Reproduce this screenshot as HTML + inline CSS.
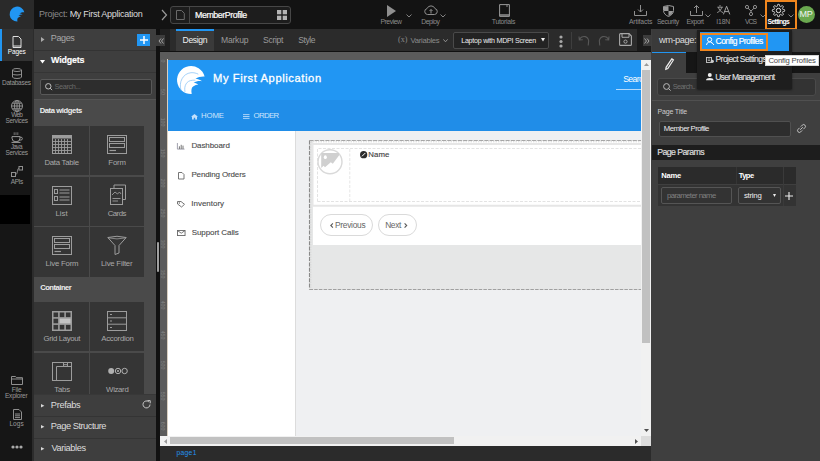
<!DOCTYPE html>
<html><head><meta charset="utf-8">
<style>
*{box-sizing:border-box;margin:0;padding:0}
html,body{width:820px;height:461px;overflow:hidden;background:#2b2b2b;font-family:"Liberation Sans",sans-serif;position:relative}
.a{position:absolute}
.t{position:absolute;white-space:nowrap;line-height:1}
svg{position:absolute;overflow:visible}
.ico{fill:none;stroke:#8f8f8f;stroke-width:1}
</style></head><body>
<div class="a" style="left:0;top:0;width:820px;height:29px;background:#131313"></div>
<div class="a" style="left:0;top:0;width:34px;height:29px;background:#2a2a2a"></div>
<svg style="left:7.8px;top:5.2px" width="18.2" height="18.2" viewBox="0 0 34 34">
<path d="M30.6 13.6 A14 14 0 1 0 17.7 31 C17 27 17.5 24 19.5 23.2 C21 22.4 22.5 21.8 24.3 21.6 C22.5 20.2 21 19.8 19.5 19.8 C22 18 25.5 17.6 28.2 18.2 C26 16.6 23.5 16 21.5 16 C24 14 27.5 13.4 30.6 13.6 Z" fill="#2196f3"/>
</svg>
<div class="t" style="left:39.0px;top:10px;font-size:9.0px;color:#8a8a8a;letter-spacing:-0.265px;">Project: <span style="color:#dcdcdc">My First Application</span></div>
<svg style="left:160px;top:9px" width="8" height="12" viewBox="0 0 8 12"><path d="M2 1 L6.5 6 L2 11" fill="none" stroke="#9a9a9a" stroke-width="1.2"/></svg>
<div class="a" style="left:170px;top:6px;width:121px;height:18px;border:1px solid #474747;border-radius:3px;background:#1d1d1d"></div>
<div class="a" style="left:189px;top:6px;width:1px;height:18px;background:#474747"></div>
<svg style="left:176px;top:10px" width="9" height="10" viewBox="0 0 9 10"><path d="M0.5 0.5 H5.5 L8.3 3.3 V9.5 H0.5 Z" fill="none" stroke="#6a6a6a" stroke-width="1"/></svg>
<div class="t" style="left:195.0px;top:11px;font-size:8.8px;color:#ffffff;letter-spacing:-0.419px;-webkit-text-stroke:0.2px #fff;">MemberProfile</div>
<svg style="left:276.5px;top:10px" width="10" height="10" viewBox="0 0 10 10"><rect x="0" y="0" width="4.3" height="4.3" fill="#b5b5b5"/><rect x="5.7" y="0" width="4.3" height="4.3" fill="#b5b5b5"/><rect x="0" y="5.7" width="4.3" height="4.3" fill="#b5b5b5"/><rect x="5.7" y="5.7" width="4.3" height="4.3" fill="#b5b5b5"/></svg>
<svg style="left:387px;top:5px" width="9" height="12" viewBox="0 0 9 12"><path d="M0 0 L9 6 L0 12 Z" fill="#8f8f8f"/></svg>
<div class="t" style="left:380.4px;top:19px;font-size:6.8px;color:#8c8c8c;letter-spacing:-0.429px;">Preview</div>
<svg style="left:406px;top:14px" width="6" height="4" viewBox="0 0 6 4"><path d="M0.5 0.5 L3 3 L5.5 0.5" fill="none" stroke="#8f8f8f" stroke-width="0.9"/></svg>
<svg style="left:424px;top:5px" width="14" height="10" viewBox="0 0 14 10"><path d="M3.5 9.5 H10.5 A3 3 0 0 0 11 3.6 A4.3 4.3 0 0 0 3 3.6 A3 3 0 0 0 3.5 9.5 Z M7 8.5 V4.5 M5.5 6 L7 4.5 L8.5 6" class="ico"/></svg>
<div class="t" style="left:421.3px;top:19px;font-size:6.8px;color:#8c8c8c;letter-spacing:-0.513px;">Deploy</div>
<svg style="left:440px;top:14px" width="6" height="4" viewBox="0 0 6 4"><path d="M0.5 0.5 L3 3 L5.5 0.5" fill="none" stroke="#8f8f8f" stroke-width="0.9"/></svg>
<svg style="left:498.5px;top:4px" width="11" height="13" viewBox="0 0 11 13"><path d="M0.6 0.6 H10.4 V12.4 H0.6 Z" fill="none" stroke="#9a9a9a" stroke-width="1"/><path d="M0.6 11 H10.4" stroke="#9a9a9a" stroke-width="1.4"/><path d="M8 0.6 V3" stroke="#9a9a9a" stroke-width="0.9"/></svg>
<div class="t" style="left:491.8px;top:19px;font-size:6.8px;color:#8c8c8c;letter-spacing:-0.265px;">Tutorials</div>
<svg style="left:634px;top:5px" width="13" height="11" viewBox="0 0 13 11"><path d="M0.5 6 V10.5 H12.5 V6 M6.5 0 V7 M4 4.5 L6.5 7 L9 4.5" class="ico"/></svg>
<div class="t" style="left:628.9px;top:19px;font-size:6.8px;color:#8c8c8c;letter-spacing:-0.145px;">Artifacts</div>
<svg style="left:663px;top:5px" width="11" height="12" viewBox="0 0 11 12"><path d="M5.5 0.5 L10.5 1.5 V5.5 C10.5 8.5 8 10.5 5.5 11.5 C3 10.5 0.5 8.5 0.5 5.5 V1.5 Z" fill="none" stroke="#9a9a9a" stroke-width="1"/><path d="M5.5 1 V6 H1 V1.8 Z" fill="#9a9a9a"/><path d="M5.5 6 H10 C9.7 8.5 7.7 10.2 5.5 11 Z" fill="#9a9a9a"/></svg>
<div class="t" style="left:656.9px;top:19px;font-size:6.8px;color:#8c8c8c;letter-spacing:-0.338px;">Security</div>
<svg style="left:690px;top:5px" width="13" height="11" viewBox="0 0 13 11"><path d="M0.5 6 V10.5 H12.5 V6 M6.5 8 V0.5 M4 3 L6.5 0.5 L9 3" class="ico"/></svg>
<div class="t" style="left:686.5px;top:19px;font-size:6.8px;color:#8c8c8c;letter-spacing:-0.433px;">Export</div>
<svg style="left:705px;top:14px" width="6" height="4" viewBox="0 0 6 4"><path d="M0.5 0.5 L3 3 L5.5 0.5" fill="none" stroke="#8f8f8f" stroke-width="0.9"/></svg>
<svg style="left:716.5px;top:5.2px" width="14" height="10" viewBox="0 0 14 10"><path d="M3 0 V1.6 M0.3 2.2 H5.9 M1.4 2.2 C2 4.6 3.4 6.4 6 7.6 M4.8 2.2 C4.2 4.6 2.8 6.4 0.2 7.6" fill="none" stroke="#a0a0a0" stroke-width="0.9"/><path d="M6.4 9.4 L9.6 1.2 L12.8 9.4 M7.6 6.6 H11.6" fill="none" stroke="#a0a0a0" stroke-width="1"/></svg>
<div class="t" style="left:716.3px;top:19px;font-size:6.8px;color:#8c8c8c;letter-spacing:-0.151px;">I18N</div>
<svg style="left:745px;top:5px" width="12" height="11" viewBox="0 0 12 11"><circle cx="2" cy="2" r="1.6" class="ico"/><circle cx="10" cy="2" r="1.6" class="ico"/><circle cx="6" cy="9" r="1.6" class="ico"/><path d="M3 3.2 L6 6 L9 3.2 M6 6 V7.4" class="ico"/></svg>
<div class="t" style="left:745.0px;top:19px;font-size:6.8px;color:#8c8c8c;letter-spacing:-0.973px;">VCS</div>
<svg style="left:760px;top:14px" width="6" height="4" viewBox="0 0 6 4"><path d="M0.5 0.5 L3 3 L5.5 0.5" fill="none" stroke="#8f8f8f" stroke-width="0.9"/></svg>
<div class="a" style="left:765px;top:0;width:32px;height:30px;border:2px solid #f0861e"></div>
<svg style="left:772.3px;top:4.2px" width="13" height="13" viewBox="0 0 13 13"><path d="M12.70 6.50 L12.70 6.74 L12.68 6.99 L12.60 7.22 L12.17 7.40 L11.70 7.53 L11.22 7.63 L10.79 7.71 L10.68 7.86 L10.63 8.02 L10.57 8.18 L10.50 8.34 L10.42 8.50 L10.39 8.68 L10.64 9.04 L10.91 9.44 L11.15 9.88 L11.33 10.31 L11.21 10.53 L11.05 10.71 L10.88 10.88 L10.71 11.05 L10.53 11.21 L10.31 11.33 L9.88 11.15 L9.44 10.91 L9.04 10.64 L8.68 10.39 L8.50 10.42 L8.34 10.50 L8.18 10.57 L8.02 10.63 L7.86 10.68 L7.71 10.79 L7.63 11.22 L7.53 11.70 L7.40 12.17 L7.22 12.60 L6.99 12.68 L6.74 12.70 L6.50 12.70 L6.26 12.70 L6.01 12.68 L5.78 12.60 L5.60 12.17 L5.47 11.70 L5.37 11.22 L5.29 10.79 L5.14 10.68 L4.98 10.63 L4.82 10.57 L4.66 10.50 L4.50 10.42 L4.32 10.39 L3.96 10.64 L3.56 10.91 L3.12 11.15 L2.69 11.33 L2.47 11.21 L2.29 11.05 L2.12 10.88 L1.95 10.71 L1.79 10.53 L1.67 10.31 L1.85 9.88 L2.09 9.44 L2.36 9.04 L2.61 8.68 L2.58 8.50 L2.50 8.34 L2.43 8.18 L2.37 8.02 L2.32 7.86 L2.21 7.71 L1.78 7.63 L1.30 7.53 L0.83 7.40 L0.40 7.22 L0.32 6.99 L0.30 6.74 L0.30 6.50 L0.30 6.26 L0.32 6.01 L0.40 5.78 L0.83 5.60 L1.30 5.47 L1.78 5.37 L2.21 5.29 L2.32 5.14 L2.37 4.98 L2.43 4.82 L2.50 4.66 L2.58 4.50 L2.61 4.32 L2.36 3.96 L2.09 3.56 L1.85 3.12 L1.67 2.69 L1.79 2.47 L1.95 2.29 L2.12 2.12 L2.29 1.95 L2.47 1.79 L2.69 1.67 L3.12 1.85 L3.56 2.09 L3.96 2.36 L4.32 2.61 L4.50 2.58 L4.66 2.50 L4.82 2.43 L4.98 2.37 L5.14 2.32 L5.29 2.21 L5.37 1.78 L5.47 1.30 L5.60 0.83 L5.78 0.40 L6.01 0.32 L6.26 0.30 L6.50 0.30 L6.74 0.30 L6.99 0.32 L7.22 0.40 L7.40 0.83 L7.53 1.30 L7.63 1.78 L7.71 2.21 L7.86 2.32 L8.02 2.37 L8.18 2.43 L8.34 2.50 L8.50 2.58 L8.68 2.61 L9.04 2.36 L9.44 2.09 L9.88 1.85 L10.31 1.67 L10.53 1.79 L10.71 1.95 L10.88 2.12 L11.05 2.29 L11.21 2.47 L11.33 2.69 L11.15 3.12 L10.91 3.56 L10.64 3.96 L10.39 4.32 L10.42 4.50 L10.50 4.66 L10.57 4.82 L10.63 4.98 L10.68 5.14 L10.79 5.29 L11.22 5.37 L11.70 5.47 L12.17 5.60 L12.60 5.78 L12.68 6.01 L12.70 6.26 Z" fill="none" stroke="#e8e8e8" stroke-width="1"/><circle cx="6.5" cy="6.5" r="2.2" fill="none" stroke="#e8e8e8" stroke-width="1"/></svg>
<div class="t" style="left:767.5px;top:19px;font-size:6.8px;color:#ffffff;letter-spacing:-0.635px;font-weight:bold;">Settings</div>
<svg style="left:788px;top:14px" width="6" height="4" viewBox="0 0 6 4"><path d="M0.5 0.5 L3 3 L5.5 0.5" fill="none" stroke="#8f8f8f" stroke-width="0.9"/></svg>
<div class="a" style="left:797.5px;top:6px;width:17px;height:17px;border-radius:50%;background:#6aa84f"></div>
<div class="t" style="left:797px;top:10px;width:18px;text-align:center;font-size:9px;color:#f2f2f2;letter-spacing:-0.3px">MP</div>
<div class="a" style="left:0;top:29px;width:32px;height:432px;background:#161616"></div>
<div class="a" style="left:32px;top:29px;width:2px;height:432px;background:#2c2c2c"></div>
<div class="a" style="left:0;top:29px;width:33px;height:32px;background:#333"></div>
<div class="a" style="left:0;top:29px;width:1.5px;height:32px;background:#2196f3"></div>
<svg style="left:12px;top:36px" width="10" height="12" viewBox="0 0 10 12"><path d="M1 0.5 H6.5 L9 3 V11.5 H1 Z" fill="none" stroke="#ddd" stroke-width="1"/><path d="M1 10 H9" stroke="#ddd" stroke-width="1"/></svg>
<div class="t" style="left:7.8px;top:49px;font-size:6.5px;color:#ffffff;letter-spacing:-0.095px;">Pages</div>
<svg style="left:12px;top:68px" width="10" height="11" viewBox="0 0 10 11"><ellipse cx="5" cy="2" rx="4.5" ry="1.5" class="ico"/><path d="M0.5 2 V9 A4.5 1.5 0 0 0 9.5 9 V2 M0.5 5.5 A4.5 1.5 0 0 0 9.5 5.5" class="ico"/></svg>
<div class="t" style="left:2.1px;top:80px;font-size:6.5px;color:#9a9a9a;letter-spacing:-0.266px;">Databases</div>
<svg style="left:11px;top:99.5px" width="12" height="12" viewBox="0 0 12 12"><circle cx="6" cy="6" r="5.5" class="ico"/><path d="M0.5 6 H11.5 M6 0.5 V11.5 M1.3 3.2 H10.7 M1.3 8.8 H10.7" class="ico" stroke-width="0.7"/><ellipse cx="6" cy="6" rx="2.5" ry="5.5" class="ico" stroke-width="0.7"/></svg>
<div class="t" style="left:11.3px;top:112px;font-size:6.5px;color:#9a9a9a;letter-spacing:-0.866px;">Web</div>
<div class="t" style="left:5.4px;top:118px;font-size:6.5px;color:#9a9a9a;letter-spacing:-0.339px;">Services</div>
<svg style="left:11px;top:132px" width="12" height="11" viewBox="0 0 12 11"><path d="M1 4.6 H9 V6.2 A4 3.6 0 0 1 1 6.2 Z" fill="none" stroke="#9a9a9a" stroke-width="1"/><path d="M9 5.2 H10 A1.4 1.4 0 0 1 10 8 H8.5" fill="none" stroke="#9a9a9a" stroke-width="0.9"/><path d="M3.2 0.3 V3 M5 0.3 V3 M6.8 0.3 V3" stroke="#9a9a9a" stroke-width="0.7"/><path d="M0.5 10.4 H9.5" stroke="#9a9a9a" stroke-width="1"/></svg>
<div class="t" style="left:10.7px;top:144px;font-size:6.5px;color:#9a9a9a;letter-spacing:-0.638px;">Java</div>
<div class="t" style="left:5.4px;top:150px;font-size:6.5px;color:#9a9a9a;letter-spacing:-0.339px;">Services</div>
<svg style="left:11px;top:166px" width="12" height="12" viewBox="0 0 12 12"><rect x="0.5" y="6.5" width="4" height="4" class="ico"/><rect x="8" y="0.5" width="3.5" height="3.5" class="ico"/><path d="M4.5 8.5 C7 8.5 6 2.2 8 2.2" class="ico"/></svg>
<div class="t" style="left:10.8px;top:179px;font-size:6.5px;color:#9a9a9a;letter-spacing:-0.459px;">APIs</div>
<div class="a" style="left:0;top:195px;width:29.5px;height:29px;background:#000"></div>
<svg style="left:11px;top:375.5px" width="12" height="9" viewBox="0 0 12 9"><path d="M0.5 0.5 H4.5 L5.5 1.7 H11.5 V8.5 H0.5 Z M0.5 3 H11.5" class="ico"/></svg>
<div class="t" style="left:11.7px;top:387px;font-size:6.5px;color:#9a9a9a;letter-spacing:-0.22px;">File</div>
<div class="t" style="left:5.0px;top:393px;font-size:6.5px;color:#9a9a9a;letter-spacing:-0.22px;">Explorer</div>
<svg style="left:13px;top:408.5px" width="9" height="11" viewBox="0 0 9 11"><path d="M0.5 0.5 H6 L8.5 3 V10.5 H0.5 Z M2 5 H7 M2 6.8 H7 M2 8.6 H7" class="ico"/></svg>
<div class="t" style="left:9.4px;top:421px;font-size:6.5px;color:#9a9a9a;letter-spacing:0.118px;">Logs</div>
<svg style="left:11px;top:445px" width="12" height="4" viewBox="0 0 12 4"><circle cx="2" cy="2" r="1.6" fill="#aaa"/><circle cx="6" cy="2" r="1.6" fill="#aaa"/><circle cx="10" cy="2" r="1.6" fill="#aaa"/></svg>
<div class="a" style="left:34px;top:29px;width:122px;height:432px;background:#3e3e3e"></div>
<div class="a" style="left:156px;top:29px;width:4px;height:432px;background:#111"></div>
<div class="a" style="left:34px;top:50px;width:122px;height:1px;background:#333"></div>
<svg style="left:40.5px;top:36.5px" width="4" height="5" viewBox="0 0 4 5"><path d="M0 0 L3.5 2.5 L0 5Z" fill="#aaa"/></svg>
<div class="t" style="left:50.8px;top:34px;font-size:9.0px;color:#a8a8a8;letter-spacing:-0.38px;">Pages</div>
<div class="a" style="left:137px;top:34px;width:13px;height:12px;background:#2196f3"></div>
<svg style="left:139.5px;top:36px" width="8" height="8" viewBox="0 0 8 8"><path d="M4 0 V8 M0 4 H8" stroke="#fff" stroke-width="1.5"/></svg>
<svg style="left:40px;top:60px" width="5" height="4" viewBox="0 0 5 4"><path d="M0 0 H5 L2.5 3.5Z" fill="#fff"/></svg>
<div class="t" style="left:51.0px;top:56px;font-size:8.9px;color:#ffffff;letter-spacing:-0.167px;font-weight:600;-webkit-text-stroke:0.15px #fff;">Widgets</div>
<div class="a" style="left:34px;top:72px;width:122px;height:1px;background:#353535"></div>
<div class="a" style="left:39.5px;top:78.5px;width:112px;height:16px;background:#2d2d2d;border:1px solid #585858;border-radius:2px"></div>
<svg style="left:45px;top:83px" width="7.5" height="7.5" viewBox="0 0 8 8"><circle cx="3.5" cy="3.5" r="2.9" fill="none" stroke="#c8c8c8" stroke-width="1"/><path d="M5.5 5.5 L7.6 7.6" stroke="#c8c8c8" stroke-width="1"/></svg>
<div class="t" style="left:54.5px;top:83px;font-size:7.4px;color:#6a6a6a;letter-spacing:-0.42px;">Search...</div>
<div class="a" style="left:34px;top:99px;width:122px;height:296px;background:#4a4a4a"></div>
<div class="a" style="left:34px;top:99px;width:122px;height:1px;background:#535353"></div>
<div class="t" style="left:39.7px;top:107px;font-size:7.6px;color:#eeeeee;letter-spacing:-0.386px;font-weight:bold;">Data widgets</div>
<div class="a" style="left:34px;top:125.9px;width:55px;height:49.3px;background:#353535"></div>
<div class="a" style="left:90px;top:125.9px;width:54px;height:49.3px;background:#353535"></div>
<div class="t" style="left:44.4px;top:159px;font-size:7.8px;color:#a9a9a9;letter-spacing:-0.261px;">Data Table</div>
<div class="t" style="left:108.3px;top:159px;font-size:7.8px;color:#a9a9a9;letter-spacing:-0.167px;">Form</div>
<div class="a" style="left:34px;top:176.8px;width:55px;height:49.3px;background:#353535"></div>
<div class="a" style="left:90px;top:176.8px;width:54px;height:49.3px;background:#353535"></div>
<div class="t" style="left:55.4px;top:210px;font-size:7.8px;color:#a9a9a9;letter-spacing:0.043px;">List</div>
<div class="t" style="left:107.7px;top:210px;font-size:7.8px;color:#a9a9a9;letter-spacing:-0.527px;">Cards</div>
<div class="a" style="left:34px;top:227.4px;width:55px;height:49.3px;background:#353535"></div>
<div class="a" style="left:90px;top:227.4px;width:54px;height:49.3px;background:#353535"></div>
<div class="t" style="left:45.6px;top:260px;font-size:7.8px;color:#a9a9a9;letter-spacing:-0.209px;">Live Form</div>
<div class="t" style="left:101.0px;top:260px;font-size:7.8px;color:#a9a9a9;letter-spacing:-0.221px;">Live Filter</div>
<div class="a" style="left:34px;top:302.2px;width:55px;height:49.3px;background:#353535"></div>
<div class="a" style="left:90px;top:302.2px;width:54px;height:49.3px;background:#353535"></div>
<div class="t" style="left:43.6px;top:335px;font-size:7.8px;color:#a9a9a9;letter-spacing:-0.355px;">Grid Layout</div>
<div class="t" style="left:101.2px;top:335px;font-size:7.8px;color:#a9a9a9;letter-spacing:-0.243px;">Accordion</div>
<div class="a" style="left:34px;top:352.8px;width:55px;height:49.3px;background:#353535"></div>
<div class="a" style="left:90px;top:352.8px;width:54px;height:49.3px;background:#353535"></div>
<div class="t" style="left:54.2px;top:386px;font-size:7.8px;color:#a9a9a9;letter-spacing:-0.159px;">Tabs</div>
<div class="t" style="left:106.1px;top:386px;font-size:7.8px;color:#a9a9a9;letter-spacing:-0.326px;">Wizard</div>
<div class="t" style="left:40.2px;top:284px;font-size:7.6px;color:#eeeeee;letter-spacing:-0.476px;font-weight:bold;">Container</div>
<svg style="left:52px;top:135px" width="20" height="19" viewBox="0 0 20 19"><rect x="0.5" y="0.5" width="19" height="18" fill="none" stroke="#9c9c9c"/><rect x="0.5" y="0.5" width="19" height="3" fill="#9c9c9c"/><path d="M3.5 4 V18 M6.5 4 V18 M9.5 4 V18 M12.5 4 V18 M15.5 4 V18 M1 6.5 H19 M1 9.5 H19 M1 12.5 H19 M1 15.5 H19" stroke="#9c9c9c" stroke-width="0.9"/></svg>
<svg style="left:107px;top:135px" width="20" height="19" viewBox="0 0 20 19"><rect x="0.5" y="0.5" width="19" height="18" fill="none" stroke="#9c9c9c"/><rect x="2.5" y="2.5" width="15" height="4" fill="none" stroke="#9c9c9c"/><rect x="2.5" y="8.5" width="15" height="4" fill="none" stroke="#9c9c9c"/><path d="M2.5 15.5 H9" stroke="#9c9c9c" stroke-width="1.2"/></svg>
<svg style="left:52px;top:186px" width="20" height="19" viewBox="0 0 20 19"><rect x="0.5" y="0.5" width="19" height="18" fill="none" stroke="#9c9c9c"/><rect x="2.5" y="3.5" width="3" height="4" fill="none" stroke="#9c9c9c"/><rect x="2.5" y="10.5" width="3" height="4" fill="none" stroke="#9c9c9c"/><path d="M7.5 4 H17.5 M7.5 7 H17.5 M7.5 11 H17.5 M7.5 14 H17.5" stroke="#9c9c9c" stroke-width="1"/></svg>
<svg style="left:110px;top:184px" width="16" height="21" viewBox="0 0 16 21"><path d="M4 4 V1 H15.5 V15.5 H12.5" fill="none" stroke="#9c9c9c"/><rect x="0.5" y="4.5" width="12" height="16" fill="none" stroke="#9c9c9c"/><path d="M2 11 L5 8 L7.5 10 L9.5 8 L11 10 M2.5 14.5 H10.5 M2.5 17 H8" fill="none" stroke="#9c9c9c" stroke-width="0.9"/></svg>
<svg style="left:52px;top:236px" width="20" height="19" viewBox="0 0 20 19"><rect x="0.5" y="0.5" width="19" height="18" fill="none" stroke="#9c9c9c"/><rect x="2.5" y="2.5" width="15" height="4" fill="none" stroke="#9c9c9c"/><rect x="2.5" y="8.5" width="15" height="4" fill="none" stroke="#9c9c9c"/><path d="M2.5 15.5 H9" stroke="#9c9c9c" stroke-width="1.2"/></svg>
<svg style="left:107px;top:236px" width="20" height="19" viewBox="0 0 20 19"><path d="M0.8 1.5 Q10 -1 19.2 1.5 L12 9.5 V17 L8 18.5 V9.5 Z" fill="none" stroke="#9c9c9c" stroke-width="1"/><path d="M1 1.8 Q10 4 19 1.8" fill="none" stroke="#9c9c9c" stroke-width="0.8"/></svg>
<svg style="left:52px;top:311px" width="20" height="20" viewBox="0 0 20 20"><rect x="0" y="0" width="20" height="20" fill="#9c9c9c"/><rect x="1.5" y="1.5" width="4.6" height="4.6" fill="#353535"/><rect x="7.7" y="1.5" width="4.6" height="4.6" fill="#353535"/><rect x="13.9" y="1.5" width="4.6" height="4.6" fill="#353535"/><rect x="1.5" y="7.7" width="4.6" height="4.6" fill="#353535"/><rect x="7.7" y="7.7" width="10.8" height="4.6" fill="#c4c4c4"/><rect x="1.5" y="13.9" width="4.6" height="4.6" fill="#353535"/><rect x="7.7" y="13.9" width="4.6" height="4.6" fill="#353535"/><rect x="13.9" y="13.9" width="4.6" height="4.6" fill="#353535"/></svg>
<svg style="left:107px;top:311px" width="20" height="20" viewBox="0 0 20 20"><rect x="0.5" y="0.5" width="19" height="19" fill="none" stroke="#9c9c9c"/><path d="M1 6.8 H19 M1 13.2 H19" stroke="#9c9c9c" stroke-width="1"/><path d="M3 3.5 H5 M3 10 H5 M3 16.5 H5" stroke="#9c9c9c" stroke-width="1"/></svg>
<svg style="left:52px;top:362px" width="20" height="19" viewBox="0 0 20 19"><rect x="0.5" y="0.5" width="19" height="18" fill="none" stroke="#9c9c9c"/><path d="M4.5 18 V4.5 H19 M11.5 1 V4.5 M15.5 4.5 V1 M12 2.7 H15" fill="none" stroke="#9c9c9c" stroke-width="1"/></svg>
<svg style="left:107.5px;top:367px" width="20" height="8" viewBox="0 0 20 8"><circle cx="3.2" cy="4" r="3" fill="#b0b0b0"/><circle cx="10" cy="4" r="2.7" fill="none" stroke="#b0b0b0"/><circle cx="10" cy="4" r="1" fill="#b0b0b0"/><circle cx="16.6" cy="4" r="2.7" fill="none" stroke="#b0b0b0"/></svg>
<div class="a" style="left:34px;top:395px;width:122px;height:66px;background:#3e3e3e"></div>
<div class="a" style="left:34px;top:394px;width:122px;height:1px;background:#383838"></div>
<div class="a" style="left:34px;top:416px;width:122px;height:1px;background:#343434"></div>
<div class="a" style="left:34px;top:438px;width:122px;height:1px;background:#343434"></div>
<svg style="left:40.9px;top:403.6px" width="4" height="4" viewBox="0 0 4 4"><path d="M0 0 L3.4 1.8 L0 3.6Z" fill="#d8d8d8"/></svg>
<svg style="left:40.9px;top:425px" width="4" height="4" viewBox="0 0 4 4"><path d="M0 0 L3.4 1.8 L0 3.6Z" fill="#d8d8d8"/></svg>
<svg style="left:40.9px;top:446.6px" width="4" height="4" viewBox="0 0 4 4"><path d="M0 0 L3.4 1.8 L0 3.6Z" fill="#d8d8d8"/></svg>
<div class="t" style="left:50.8px;top:401px;font-size:9.3px;color:#dddddd;letter-spacing:-0.35px;">Prefabs</div>
<div class="t" style="left:50.8px;top:422px;font-size:9.3px;color:#dddddd;letter-spacing:-0.482px;">Page Structure</div>
<div class="t" style="left:51.5px;top:444px;font-size:9.3px;color:#dddddd;letter-spacing:-0.441px;">Variables</div>
<svg style="left:141.8px;top:399.5px" width="9" height="9" viewBox="0 0 9 9"><path d="M8 4.5 A3.5 3.5 0 1 1 6.8 1.8" fill="none" stroke="#c8c8c8" stroke-width="1"/><path d="M5.5 0.6 H8.2 V3.3" fill="none" stroke="#c8c8c8" stroke-width="1"/></svg>
<div class="a" style="left:160px;top:29px;width:477px;height:22px;background:#2b2b2b"></div>
<div class="a" style="left:160px;top:29px;width:10px;height:22px;background:#1f1f1f"></div>
<div class="a" style="left:637px;top:29px;width:14px;height:22px;background:#1a1a1a"></div>
<div class="a" style="left:156px;top:35px;width:9px;height:11px;background:#3c3c3c"></div>
<svg style="left:157.5px;top:38px" width="6" height="6" viewBox="0 0 6 6"><path d="M3 0.5 L1 3 L3 5.5 M5.5 0.5 L3.5 3 L5.5 5.5" fill="none" stroke="#b0b0b0" stroke-width="0.9"/></svg>
<div class="a" style="left:176px;top:29px;width:37.5px;height:22px;background:#3a3a3a"></div>
<div class="a" style="left:176px;top:29px;width:37.5px;height:2px;background:#2196f3"></div>
<div class="t" style="left:182.6px;top:36px;font-size:8.6px;color:#f0f0f0;letter-spacing:-0.357px;">Design</div>
<div class="t" style="left:221.0px;top:36px;font-size:8.6px;color:#9a9a9a;letter-spacing:-0.239px;">Markup</div>
<div class="t" style="left:263.1px;top:36px;font-size:8.6px;color:#9a9a9a;letter-spacing:-0.319px;">Script</div>
<div class="t" style="left:298.2px;top:36px;font-size:8.6px;color:#9a9a9a;letter-spacing:-0.434px;">Style</div>
<div class="t" style="left:398px;top:36px;font-size:8px;color:#8a8a8a;font-family:'Liberation Serif',serif">(x)</div>
<div class="t" style="left:410.6px;top:37px;font-size:7.7px;color:#8a8a8a;letter-spacing:-0.297px;">Variables</div>
<svg style="left:442.8px;top:38.5px" width="5" height="4" viewBox="0 0 5 4"><path d="M0.4 0.4 L2.5 2.8 L4.6 0.4" fill="none" stroke="#9a9a9a" stroke-width="0.9"/></svg>
<div class="a" style="left:452.5px;top:31.5px;width:96.5px;height:17.5px;background:#232323;border:1px solid #4a4a4a;border-radius:2px"></div>
<div class="t" style="left:461.2px;top:38px;font-size:7.1px;color:#eeeeee;letter-spacing:-0.244px;">Laptop with MDPI Screen</div>
<svg style="left:541px;top:38.2px" width="4" height="3.5" viewBox="0 0 4 3.5"><path d="M0 0 H4 L2 3.5Z" fill="#eee"/></svg>
<svg style="left:558.5px;top:34.5px" width="4" height="13" viewBox="0 0 4 13"><circle cx="2" cy="2" r="1.6" fill="#a8a8a8"/><circle cx="2" cy="6.5" r="1.6" fill="#a8a8a8"/><circle cx="2" cy="11" r="1.6" fill="#a8a8a8"/></svg>
<div class="a" style="left:571px;top:32px;width:1px;height:17px;background:#3e3e3e"></div>
<svg style="left:578px;top:35px" width="12" height="11" viewBox="0 0 12 11"><path d="M1 1.5 L1.3 5 L4.8 4.7 M1.5 4.8 A4.6 4.6 0 0 1 10.5 7.5 L10.2 10.5" fill="none" stroke="#585858" stroke-width="1.1"/></svg>
<svg style="left:598px;top:35px" width="12" height="11" viewBox="0 0 12 11"><path d="M11 1.5 L10.7 5 L7.2 4.7 M10.5 4.8 A4.6 4.6 0 0 0 1.5 7.5 L1.8 10.5" fill="none" stroke="#585858" stroke-width="1.1"/></svg>
<svg style="left:619px;top:33px" width="13" height="13" viewBox="0 0 13 13"><path d="M0.6 1.6 Q0.6 0.6 1.6 0.6 H10 L12.4 3 V11.4 Q12.4 12.4 11.4 12.4 H1.6 Q0.6 12.4 0.6 11.4 Z" fill="none" stroke="#a8a8a8" stroke-width="1.1"/><path d="M3 0.6 V4.3 H10 V0.6" fill="none" stroke="#a8a8a8" stroke-width="1"/><circle cx="6.5" cy="8.6" r="1.6" fill="none" stroke="#a8a8a8" stroke-width="1"/></svg>
<div class="a" style="left:643px;top:35px;width:8px;height:11px;background:#3c3c3c"></div>
<svg style="left:644px;top:38px" width="6" height="6" viewBox="0 0 6 6"><path d="M0.5 0.5 L2.5 3 L0.5 5.5 M3 0.5 L5 3 L3 5.5" fill="none" stroke="#b0b0b0" stroke-width="0.9"/></svg>
<div class="a" style="left:156px;top:51px;width:496px;height:410px;background:#111"></div>
<div class="a" style="left:160px;top:52px;width:491px;height:394px;background:#5b5b5b"></div>
<div class="a" style="left:156.5px;top:242px;width:2.5px;height:30px;background:#a0a0a0;border-radius:1px"></div>
<div class="a" style="left:167px;top:59px;width:1px;height:378px;background:#d9cfc0"></div>
<div class="t" style="left:152.6px;top:58.3px;width:20px;height:6px;line-height:6px;text-align:center;font-size:5.2px;color:#858585;transform:rotate(90deg)">0</div>
<div class="t" style="left:152.6px;top:88.69999999999999px;width:20px;height:6px;line-height:6px;text-align:center;font-size:5.2px;color:#858585;transform:rotate(90deg)">50</div>
<div class="t" style="left:152.6px;top:119.1px;width:20px;height:6px;line-height:6px;text-align:center;font-size:5.2px;color:#858585;transform:rotate(90deg)">100</div>
<div class="t" style="left:152.6px;top:149.5px;width:20px;height:6px;line-height:6px;text-align:center;font-size:5.2px;color:#858585;transform:rotate(90deg)">150</div>
<div class="t" style="left:152.6px;top:179.89999999999998px;width:20px;height:6px;line-height:6px;text-align:center;font-size:5.2px;color:#858585;transform:rotate(90deg)">200</div>
<div class="t" style="left:152.6px;top:210.3px;width:20px;height:6px;line-height:6px;text-align:center;font-size:5.2px;color:#858585;transform:rotate(90deg)">250</div>
<div class="t" style="left:152.6px;top:240.7px;width:20px;height:6px;line-height:6px;text-align:center;font-size:5.2px;color:#858585;transform:rotate(90deg)">300</div>
<div class="t" style="left:152.6px;top:271.09999999999997px;width:20px;height:6px;line-height:6px;text-align:center;font-size:5.2px;color:#858585;transform:rotate(90deg)">350</div>
<div class="t" style="left:152.6px;top:301.5px;width:20px;height:6px;line-height:6px;text-align:center;font-size:5.2px;color:#858585;transform:rotate(90deg)">400</div>
<div class="t" style="left:152.6px;top:331.9px;width:20px;height:6px;line-height:6px;text-align:center;font-size:5.2px;color:#858585;transform:rotate(90deg)">450</div>
<div class="t" style="left:152.6px;top:362.3px;width:20px;height:6px;line-height:6px;text-align:center;font-size:5.2px;color:#858585;transform:rotate(90deg)">500</div>
<div class="t" style="left:152.6px;top:392.7px;width:20px;height:6px;line-height:6px;text-align:center;font-size:5.2px;color:#858585;transform:rotate(90deg)">550</div>
<div class="t" style="left:152.6px;top:423.09999999999997px;width:20px;height:6px;line-height:6px;text-align:center;font-size:5.2px;color:#858585;transform:rotate(90deg)">600</div>
<div class="a" style="left:168px;top:59.5px;width:473px;height:377px;background:#eff0f2"></div>
<div class="a" style="left:168px;top:59.5px;width:473px;height:40px;background:#2196f3"></div>
<div class="a" style="left:168px;top:99.5px;width:473px;height:31.5px;background:#208de8"></div>
<svg style="left:174px;top:63px" width="34" height="34" viewBox="0 0 34 34">
<path d="M30.6 13.6 A14 14 0 1 0 17.7 31 C17 27 17.5 24 19.5 23.2 C21 22.4 22.5 21.8 24.3 21.6 C22.5 20.2 21 19.8 19.5 19.8 C22 18 25.5 17.6 28.2 18.2 C26 16.6 23.5 16 21.5 16 C24 14 27.5 13.4 30.6 13.6 Z" fill="#fff"/>
<path d="M7 27.3 C4.5 19 9 10.5 17 9.7 C19.8 9.5 22.5 10.2 24.3 11.2 M11 28.8 C9.8 23 12.5 17.5 18.4 17.3 C19.5 17.2 20.5 17.1 21.4 17.2" fill="none" stroke="#7fbff5" stroke-width="0.7"/>
</svg>
<div class="t" style="left:213.0px;top:73px;font-size:11.2px;color:#ffffff;letter-spacing:0.585px;-webkit-text-stroke:0.3px #fff;">My First Application</div>
<div class="t" style="left:623.2px;top:75px;font-size:8.6px;color:#ffffff;letter-spacing:-0.616px;">Searc</div>
<div class="a" style="left:616px;top:89px;width:25px;height:1px;background:#b3d9fb"></div>
<svg style="left:190.5px;top:113.5px" width="7" height="5.5" viewBox="0 0 7 5.5"><path d="M0 2.8 L3.5 0 L7 2.8 H6 V5.5 H4.2 V3.8 H2.8 V5.5 H1 V2.8 Z" fill="#c3e0fb"/></svg>
<div class="t" style="left:201.0px;top:112px;font-size:7.8px;color:#cfe6fc;letter-spacing:-0.132px;">HOME</div>
<svg style="left:243.2px;top:114px" width="6.5" height="5" viewBox="0 0 6.5 5"><path d="M0 0.6 H6.5 M0 2.5 H6.5 M0 4.4 H6.5" stroke="#b8dafa" stroke-width="0.9"/></svg>
<div class="t" style="left:253.6px;top:112px;font-size:7.8px;color:#cfe6fc;letter-spacing:-0.634px;">ORDER</div>
<div class="a" style="left:168px;top:131px;width:128px;height:306px;background:#fff;border-right:1px solid #dcdcdc"></div>
<svg style="left:177.4px;top:143px" width="7.5" height="6.5" viewBox="0 0 7.5 6.5"><path d="M0.4 0 V6.1 H7.5" fill="none" stroke="#8a8a9a" stroke-width="0.8"/><path d="M2.4 6 V3.3 M4.2 6 V1.8 M6 6 V2.6" fill="none" stroke="#777" stroke-width="1"/></svg>
<div class="t" style="left:191.4px;top:142px;font-size:8.0px;color:#4d4d4d;letter-spacing:-0.086px;-webkit-text-stroke:0.12px #4d4d4d;">Dashboard</div>
<svg style="left:178px;top:171.5px" width="6.5" height="7.5" viewBox="0 0 6.5 7.5"><path d="M0.5 0.5 H4 L6 2.5 V7 H0.5 Z" fill="none" stroke="#666" stroke-width="0.9"/></svg>
<div class="t" style="left:191.4px;top:171px;font-size:8.0px;color:#4d4d4d;letter-spacing:-0.133px;-webkit-text-stroke:0.12px #4d4d4d;">Pending Orders</div>
<svg style="left:177.2px;top:201px" width="8" height="6.5" viewBox="0 0 8 6.5"><path d="M0.5 0.5 H4 L7.5 3.3 L4.6 6 L0.5 3 Z" fill="none" stroke="#666" stroke-width="0.9"/><circle cx="2.3" cy="2" r="0.7" fill="#666"/></svg>
<div class="t" style="left:191.3px;top:200px;font-size:8.0px;color:#4d4d4d;letter-spacing:-0.013px;-webkit-text-stroke:0.12px #4d4d4d;">Inventory</div>
<svg style="left:177px;top:230.3px" width="8.5" height="6" viewBox="0 0 8.5 6"><rect x="0.45" y="0.45" width="7.6" height="5.1" fill="none" stroke="#666" stroke-width="0.9"/><path d="M0.5 0.6 L4.25 3.2 L8 0.6" fill="none" stroke="#666" stroke-width="0.9"/></svg>
<div class="t" style="left:191.7px;top:229px;font-size:8.0px;color:#4d4d4d;letter-spacing:-0.077px;-webkit-text-stroke:0.12px #4d4d4d;">Support Calls</div>
<div class="a" style="left:309px;top:140px;width:332px;height:149.5px;background:#e6e7e7"></div>
<div class="a" style="left:313px;top:141px;width:328px;height:104px;background:#fff"></div>
<svg style="left:0;top:0" width="820" height="461" viewBox="0 0 820 461"><path d="M309.5 140.5 H641" stroke="#a6a6a6" stroke-width="1" stroke-dasharray="4 1.3"/><path d="M309.5 140.5 V289.5" fill="none" stroke="#8a8a8a" stroke-width="1.1" stroke-dasharray="4 1.3"/><path d="M309.5 289.5 H641" fill="none" stroke="#a0a0a0" stroke-width="1" stroke-dasharray="3.5 1.2"/><path d="M310.5 141.8 H641 M310.8 141.5 V289" fill="none" stroke="#d6d6d6" stroke-width="1" stroke-dasharray="1.5 1"/><path d="M312.5 206 V144 H641 M312.5 205.7 H641" fill="none" stroke="#e6e6e6" stroke-width="2"/><path d="M317.5 201.5 V148.5 H641 M317.5 201.5 H641" fill="none" stroke="#e3e3e3" stroke-width="1" stroke-dasharray="3 1.5"/><path d="M349.8 149 V201" fill="none" stroke="#e6e6e6" stroke-width="1" stroke-dasharray="3 1.5"/><circle cx="330" cy="161.7" r="12" fill="#fff" stroke="#d9d9d9" stroke-width="1.4"/><path d="M321.2 153 H339 V155.5 L332.8 163.8 L330.8 162.2 L325 167.2 L323.6 165.8 L321.2 168 Z" fill="#d0d0d0"/><ellipse cx="325.3" cy="157.2" rx="1.5" ry="1.9" fill="#fff"/></svg>
<svg style="left:360.2px;top:151.4px" width="7.3" height="7.3" viewBox="0 0 7.3 7.3"><circle cx="3.65" cy="3.65" r="3.65" fill="#2c2c2c"/><path d="M2 5.3 L5.3 2" stroke="#fff" stroke-width="1"/></svg>
<div class="t" style="left:368.3px;top:151px;font-size:7.8px;color:#444444;letter-spacing:0.077px;-webkit-text-stroke:0.15px #444;">Name</div>
<div class="a" style="left:320px;top:214px;width:53px;height:21.5px;border:1px solid #dadada;border-radius:11px;background:#fff"></div>
<svg style="left:329.8px;top:222.8px" width="3.5" height="5" viewBox="0 0 3.5 5"><path d="M2.9 0.4 L0.8 2.5 L2.9 4.6" fill="none" stroke="#5a5a5a" stroke-width="1.1"/></svg>
<div class="t" style="left:335.0px;top:221px;font-size:8.4px;color:#666666;letter-spacing:-0.283px;">Previous</div>
<div class="a" style="left:377.5px;top:214px;width:39.5px;height:21.5px;border:1px solid #dadada;border-radius:11px;background:#fff"></div>
<div class="t" style="left:385.2px;top:221px;font-size:8.4px;color:#666666;letter-spacing:-0.379px;">Next</div>
<svg style="left:404px;top:222.8px" width="3.5" height="5" viewBox="0 0 3.5 5"><path d="M0.6 0.4 L2.7 2.5 L0.6 4.6" fill="none" stroke="#5a5a5a" stroke-width="1.1"/></svg>
<div class="a" style="left:641px;top:59.5px;width:10px;height:377px;background:#f1f1f1"></div>
<div class="a" style="left:642.3px;top:70px;width:7.4px;height:273px;background:#c1c1c1"></div>
<svg style="left:643.5px;top:62.5px" width="5" height="3" viewBox="0 0 5 3"><path d="M0 3 L2.5 0 L5 3Z" fill="#9a9a9a"/></svg>
<svg style="left:643.5px;top:428.5px" width="5" height="3" viewBox="0 0 5 3"><path d="M0 0 L2.5 3 L5 0Z" fill="#505050"/></svg>
<div class="a" style="left:160px;top:436px;width:491px;height:10px;background:#f1f1f1"></div>
<div class="a" style="left:170px;top:437.3px;width:283.5px;height:7px;background:#c1c1c1"></div>
<svg style="left:163.5px;top:438.5px" width="3" height="5" viewBox="0 0 3 5"><path d="M3 0 L0 2.5 L3 5Z" fill="#9a9a9a"/></svg>
<svg style="left:634.5px;top:438.5px" width="3" height="5" viewBox="0 0 3 5"><path d="M0 0 L3 2.5 L0 5Z" fill="#505050"/></svg>
<div class="a" style="left:641px;top:436px;width:10px;height:10px;background:#dcdcdc"></div>
<div class="a" style="left:160px;top:446px;width:491px;height:15px;background:#2b2b2b"></div>
<div class="t" style="left:176.4px;top:450px;font-size:6.8px;color:#2391ee;letter-spacing:0.293px;">page1</div>
<div class="a" style="left:651px;top:29px;width:169px;height:432px;background:#3f3f3f"></div>
<div class="a" style="left:652px;top:29px;width:168px;height:22.5px;background:#3a3a3a"></div>
<div class="t" style="left:658.9px;top:36px;font-size:9.3px;color:#dddddd;letter-spacing:-0.464px;">wm-page:</div>
<div class="a" style="left:652px;top:51.5px;width:34px;height:1.5px;background:#2196f3"></div>
<div class="a" style="left:686px;top:51.5px;width:134px;height:21.5px;background:#161616"></div>
<svg style="left:664.5px;top:57.5px" width="9" height="12" viewBox="0 0 9 12"><path d="M6.8 0.8 L8.4 2 L2.8 10.6 L0.8 11.4 L1.1 9.3 Z" fill="none" stroke="#eeeeee" stroke-width="1.2"/></svg>
<div class="a" style="left:657px;top:78px;width:159px;height:17.5px;background:#333;border:1px solid #4a4a4a;border-radius:3px"></div>
<svg style="left:663px;top:82.5px" width="8" height="8" viewBox="0 0 8 8"><circle cx="3.5" cy="3.5" r="2.9" fill="none" stroke="#bbb" stroke-width="1"/><path d="M5.5 5.5 L7.6 7.6" stroke="#bbb" stroke-width="1"/></svg>
<div class="t" style="left:672.7px;top:83px;font-size:7.3px;color:#6f6f6f;letter-spacing:-0.608px;">Search..</div>
<div class="a" style="left:652px;top:100px;width:168px;height:1px;background:#505050"></div>
<div class="t" style="left:657.4px;top:108px;font-size:7.0px;color:#cccccc;letter-spacing:-0.14px;">Page Title</div>
<div class="a" style="left:658.5px;top:120.5px;width:132.5px;height:16px;background:#2d2d2d;border:1px solid #505050;border-radius:2px"></div>
<div class="t" style="left:663.8px;top:125px;font-size:7.7px;color:#eeeeee;letter-spacing:-0.502px;">Member Profile</div>
<svg style="left:796.5px;top:124px" width="9" height="9" viewBox="0 0 9 9"><path d="M3.2 5.8 L5.8 3.2 M3.8 2.6 L5.3 1.1 A1.7 1.7 0 0 1 7.9 3.7 L6.4 5.2 M5.2 6.4 L3.7 7.9 A1.7 1.7 0 0 1 1.1 5.3 L2.6 3.8" fill="none" stroke="#cfcfcf" stroke-width="0.9"/></svg>
<div class="a" style="left:652px;top:145px;width:168px;height:14.5px;background:#1d1d1d"></div>
<div class="t" style="left:657.2px;top:148px;font-size:8.8px;color:#dddddd;letter-spacing:-0.592px;-webkit-text-stroke:0.2px #ddd;">Page Params</div>
<div class="a" style="left:658px;top:167.3px;width:137.5px;height:17.2px;background:#2b2b2b"></div>
<div class="a" style="left:658px;top:184.5px;width:137.5px;height:21.8px;background:#333"></div>
<div class="a" style="left:735.5px;top:167.3px;width:1px;height:17.2px;background:#353535"></div>
<div class="a" style="left:783px;top:167.3px;width:1px;height:39px;background:#3a3a3a"></div>
<div class="t" style="left:661.3px;top:172px;font-size:7.6px;color:#ffffff;letter-spacing:-0.291px;font-weight:bold;">Name</div>
<div class="t" style="left:738.8px;top:172px;font-size:7.6px;color:#ffffff;letter-spacing:-0.616px;font-weight:bold;">Type</div>
<div class="a" style="left:661.4px;top:186.8px;width:71px;height:17px;background:#333;border:1px solid #555;border-radius:2px"></div>
<div class="t" style="left:667.1px;top:192px;font-size:7.8px;color:#808080;letter-spacing:-0.615px;">parameter name</div>
<div class="a" style="left:738px;top:186.8px;width:42.8px;height:17px;background:#333;border:1px solid #555;border-radius:2px"></div>
<div class="t" style="left:743.9px;top:192px;font-size:7.8px;color:#eeeeee;letter-spacing:-0.247px;">string</div>
<svg style="left:773px;top:194.2px" width="3" height="3" viewBox="0 0 3 3"><path d="M0 0 H3 L1.5 3Z" fill="#eee"/></svg>
<svg style="left:785.3px;top:191.7px" width="8" height="8" viewBox="0 0 8 8"><path d="M4 0 V8 M0 4 H8" stroke="#eee" stroke-width="1.1"/></svg>
<div class="a" style="left:697px;top:30px;width:95px;height:59px;background:#1e1e1e;box-shadow:0 1px 2px rgba(0,0,0,.5)"></div>
<div class="a" style="left:700px;top:32.3px;width:89px;height:18.4px;background:#2196f3"></div>
<div class="a" style="left:700px;top:32.5px;width:68px;height:18px;border:2px solid #f0861e"></div>
<svg style="left:705.5px;top:37px" width="8.5" height="8.5" viewBox="0 0 8.5 8.5"><circle cx="3.6" cy="2.6" r="2.1" fill="none" stroke="#fff" stroke-width="1"/><path d="M0.5 8 A3.2 3.2 0 0 1 6.2 6.2 M5.2 4.9 L8 8" fill="none" stroke="#fff" stroke-width="1"/></svg>
<div class="t" style="left:715.6px;top:37px;font-size:8.5px;color:#ffffff;letter-spacing:-0.545px;-webkit-text-stroke:0.2px #fff;">Config Profiles</div>
<svg style="left:705.6px;top:56.6px" width="8" height="6" viewBox="0 0 8 6"><rect x="0.5" y="0.5" width="5" height="5" fill="none" stroke="#ccc" stroke-width="0.9"/><path d="M1.8 2 H4.2 M1.8 3.5 H4.2" stroke="#ccc" stroke-width="0.7"/><circle cx="6.3" cy="4.3" r="1.6" fill="#ccc"/></svg>
<div class="t" style="left:715.5px;top:55px;font-size:8.5px;color:#dddddd;letter-spacing:-0.559px;-webkit-text-stroke:0.2px #ddd;">Project Settings</div>
<svg style="left:705.9px;top:73.4px" width="7.6" height="7.3" viewBox="0 0 7.6 7.3"><circle cx="3.8" cy="2" r="2" fill="#eee"/><path d="M0 7.3 C0 4.2 7.6 4.2 7.6 7.3Z" fill="#eee"/></svg>
<div class="t" style="left:715.2px;top:73px;font-size:8.5px;color:#dddddd;letter-spacing:-0.719px;-webkit-text-stroke:0.2px #ddd;">User Management</div>
<div class="a" style="left:765.2px;top:55.1px;width:53.7px;height:11px;background:#fff;border:1px solid #d5d5d5"></div>
<div class="t" style="left:768.5px;top:57px;font-size:7.7px;color:#4a4a4a;letter-spacing:-0.187px;">Config Profiles</div>
</body></html>
